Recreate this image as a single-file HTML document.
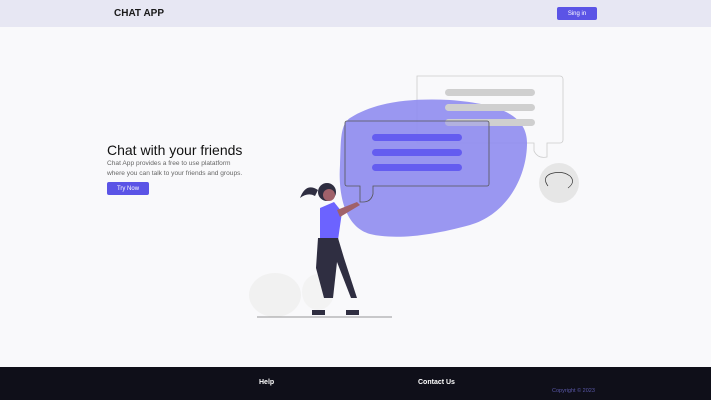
<!DOCTYPE html>
<html><head><style>
body{margin:0;width:711px;height:400px;background:#f9f9fb;font-family:"Liberation Sans",sans-serif;position:relative;overflow:hidden}
.hdr{position:absolute;left:0;top:0;width:711px;height:27px;background:#e7e7f3}
.logo{position:absolute;left:114px;top:8px;font-size:10px;font-weight:bold;color:#1a1a1a}
.btn{position:absolute;background:#5b54e6;color:#fff;font-size:6px;display:flex;align-items:center;justify-content:center;border-radius:2px}
h1{position:absolute;left:107px;top:142px;margin:0;font-size:14px;font-weight:normal;color:#111;letter-spacing:0}
p{position:absolute;left:107px;top:159px;margin:0;font-size:6.6px;line-height:10px;color:#666}
.ftr{position:absolute;left:0;top:367px;width:711px;height:33px;background:#0f0f19}
.ftr span{position:absolute;color:#fff;font-size:7px;font-weight:bold}
</style></head><body>
<div class="hdr"><div class="logo">CHAT APP</div><div class="btn" style="left:557px;top:7px;width:40px;height:13px">Sing in</div></div>
<h1>Chat with your friends</h1>
<p>Chat App provides a free to use platatform<br>where you can talk to your friends and groups.</p>
<div class="btn" style="left:107px;top:182px;width:42px;height:13px">Try Now</div>
<svg style="position:absolute;left:0;top:0" width="711" height="400">
<path d="M417 76 h143 a3 3 0 0 1 3 3 v61 a3 3 0 0 1 -3 3 h-13 v14 q-9 2-13-6 v-8 h-117 z" fill="none" stroke="#ccc" stroke-width=".8"/>
<path d="M350 118 C375 102 410 98 450 100 C500 104 528 115 527 145 C526 180 505 215 470 225 C430 236 395 240 370 234 C345 227 338 195 340 165 C341 140 340 125 350 118Z" fill="#8f8cef" opacity=".9"/>
<g fill="#cfcfcf"><rect x="445" y="89" width="90" height="7" rx="3.5"/><rect x="445" y="104" width="90" height="7" rx="3.5"/><rect x="445" y="119" width="90" height="7" rx="3.5"/></g>
<path d="M347 121 h140 a2 2 0 0 1 2 2 v61 a2 2 0 0 1 -2 2 h-114 v8 q-2 8-10 8 h-3 v-16 h-13 a2 2 0 0 1 -2-2 v-61 a2 2 0 0 1 2-2z" fill="rgba(150,148,240,.5)" stroke="#555" stroke-width=".8"/>
<g fill="#645cf0"><rect x="372" y="134" width="90" height="7" rx="3.5"/><rect x="372" y="149" width="90" height="7" rx="3.5"/><rect x="372" y="164" width="90" height="7" rx="3.5"/></g>
<circle cx="559" cy="183" r="20" fill="#e6e6e6"/>
<path d="M548 186 q-6-8 2-12 q12-4 20 2 q6 6-2 12" fill="none" stroke="#333" stroke-width=".7"/>
<ellipse cx="275" cy="295" rx="26" ry="22" fill="#f1f1f1"/>
<ellipse cx="318" cy="292" rx="16" ry="18" fill="#f3f3f3"/>
<line x1="257" y1="317" x2="392" y2="317" stroke="#777" stroke-width=".8"/>
<path d="M318 190 q-12-8-18 8 q8-6 15-2z" fill="#2f2e41"/>
<circle cx="327" cy="192" r="9" fill="#2f2e41"/>
<circle cx="329" cy="195" r="6" fill="#a0616a"/>
<path d="M320 208 l14-6 l8 10 l-4 28 h-18z" fill="#6c63ff"/>
<path d="M337 210 l20-8 l3 3 l-20 12z" fill="#a0616a"/>
<path d="M318 238 h20 l6 20 l13 40 h-6 l-14-36 l-4 36 h-9 l-8-30z" fill="#2f2e41"/>
<path d="M312 310 h13 v5 h-13z M346 310 h13 v5 h-13z" fill="#2f2e41"/>
</svg>
<div class="ftr"><span style="left:259px;top:12px">Help</span><span style="left:418px;top:12px">Contact Us</span><span style="left:552px;top:21px;font-size:5.5px;font-weight:normal;color:#5a58a8">Copyright © 2023</span></div>
</body></html>
